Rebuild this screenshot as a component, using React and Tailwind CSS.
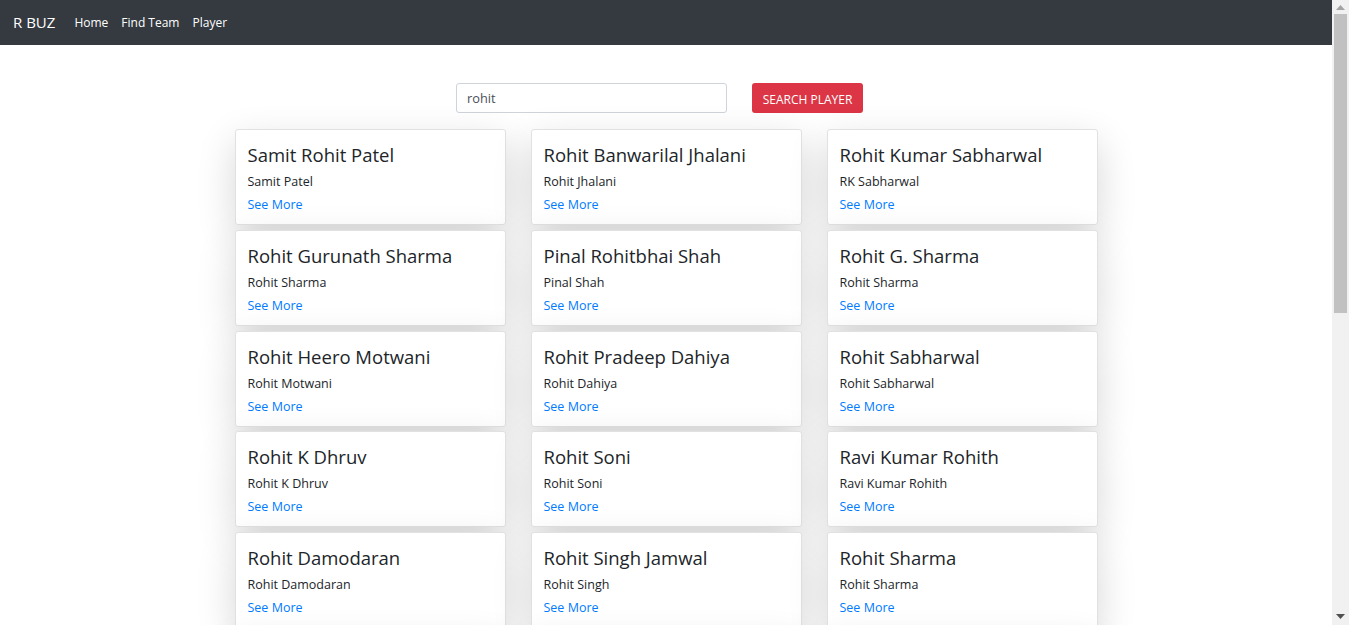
import { useState } from "react";

const players = [
  { name: "Samit Rohit Patel", short: "Samit Patel" },
  { name: "Rohit Banwarilal Jhalani", short: "Rohit Jhalani" },
  { name: "Rohit Kumar Sabharwal", short: "RK Sabharwal" },
  { name: "Rohit Gurunath Sharma", short: "Rohit Sharma" },
  { name: "Pinal Rohitbhai Shah", short: "Pinal Shah" },
  { name: "Rohit G. Sharma", short: "Rohit Sharma" },
  { name: "Rohit Heero Motwani", short: "Rohit Motwani" },
  { name: "Rohit Pradeep Dahiya", short: "Rohit Dahiya" },
  { name: "Rohit Sabharwal", short: "Rohit Sabharwal" },
  { name: "Rohit K Dhruv", short: "Rohit K Dhruv" },
  { name: "Rohit Soni", short: "Rohit Soni" },
  { name: "Ravi Kumar Rohith", short: "Ravi Kumar Rohith" },
  { name: "Rohit Damodaran", short: "Rohit Damodaran" },
  { name: "Rohit Singh Jamwal", short: "Rohit Singh" },
  { name: "Rohit Sharma", short: "Rohit Sharma" },
  { name: "Rohit Rayudu", short: "Rohit Rayudu" },
  { name: "Rohit Motwani", short: "Rohit Motwani" },
  { name: "Rohit Asnodkar", short: "Rohit Asnodkar" },
  { name: "Rohit Paudel", short: "Rohit Paudel" },
  { name: "Rohit Jhalani", short: "Rohit Jhalani" },
  { name: "Rohith Ravindran", short: "Rohith Ravindran" },
];

function PlayerCard({ player }) {
  return (
    <div className="flex flex-col rounded-[3px] border border-[#e1e1e1] bg-white px-[12px] pt-[13px] pb-[10px] shadow-[0_13px_38px_rgba(0,0,0,0.16)]">
      <h4 className="text-[18.5px] leading-[23px] font-medium text-[#212529]">{player.name}</h4>
      <p className="mt-[6px] text-[12.5px] leading-[19px] font-medium text-[#212529]">{player.short}</p>
      <a href="#" className="mt-[4px] text-[12.5px] leading-[19px] text-[#007bff]">
        See More
      </a>
    </div>
  );
}

// window scrollbar as it shows in the screenshot
function ScrollGutter() {
  return (
    <div className="flex h-full w-[17px] shrink-0 flex-col items-center bg-[#f1f1f1]">
      <svg width="9" height="5" viewBox="0 0 9 5" className="mt-[5px]">
        <path d="M0 5 L4.5 0 L9 5 Z" fill="#a3a3a3" />
      </svg>
      <div className="mt-[4px] h-[299px] w-[13px] bg-[#c1c1c1]" />
      <div className="flex-1" />
      <svg width="9" height="5" viewBox="0 0 9 5" className="mb-[6px]">
        <path d="M0 0 L9 0 L4.5 5 Z" fill="#505050" />
      </svg>
    </div>
  );
}

export default function App() {
  const [query, setQuery] = useState("rohit");

  return (
    <div className="flex h-screen overflow-hidden bg-white font-['Open_Sans','Noto_Sans',sans-serif] text-[#212529]">
      <div className="min-w-0 flex-1">
        {/* Navbar */}
        <nav className="flex h-[45px] items-center bg-[#343a40] px-[13px]">
          <span className="mr-[19px] text-[15px] text-white">R BUZ</span>
          <div className="flex items-center gap-[13px] text-[12px] text-white">
            <a href="#">Home</a>
            <a href="#">Find Team</a>
            <a href="#">Player</a>
          </div>
        </nav>

        {/* Search */}
        <div className="mt-[38px] flex justify-center">
          <div className="flex w-[420px] items-center gap-[25px] pr-[13px]">
            <input
              value={query}
              onChange={(e) => setQuery(e.target.value)}
              className="h-[30px] w-[271px] rounded-[3px] border border-[#ced4da] px-[10px] text-[12.8px] text-[#495057] outline-none"
            />
            <button className="h-[30px] w-[111px] rounded-[3px] bg-[#dc3545] pt-[3px] text-[12px] text-white">
              SEARCH PLAYER
            </button>
          </div>
        </div>

        {/* Results */}
        <div className="mx-auto mt-[16px] grid w-[863px] grid-cols-3 gap-x-[25px] gap-y-[4.75px] pb-[40px]">
          {players.map((p, i) => (
            <PlayerCard key={i} player={p} />
          ))}
        </div>
      </div>
      <ScrollGutter />
    </div>
  );
}
